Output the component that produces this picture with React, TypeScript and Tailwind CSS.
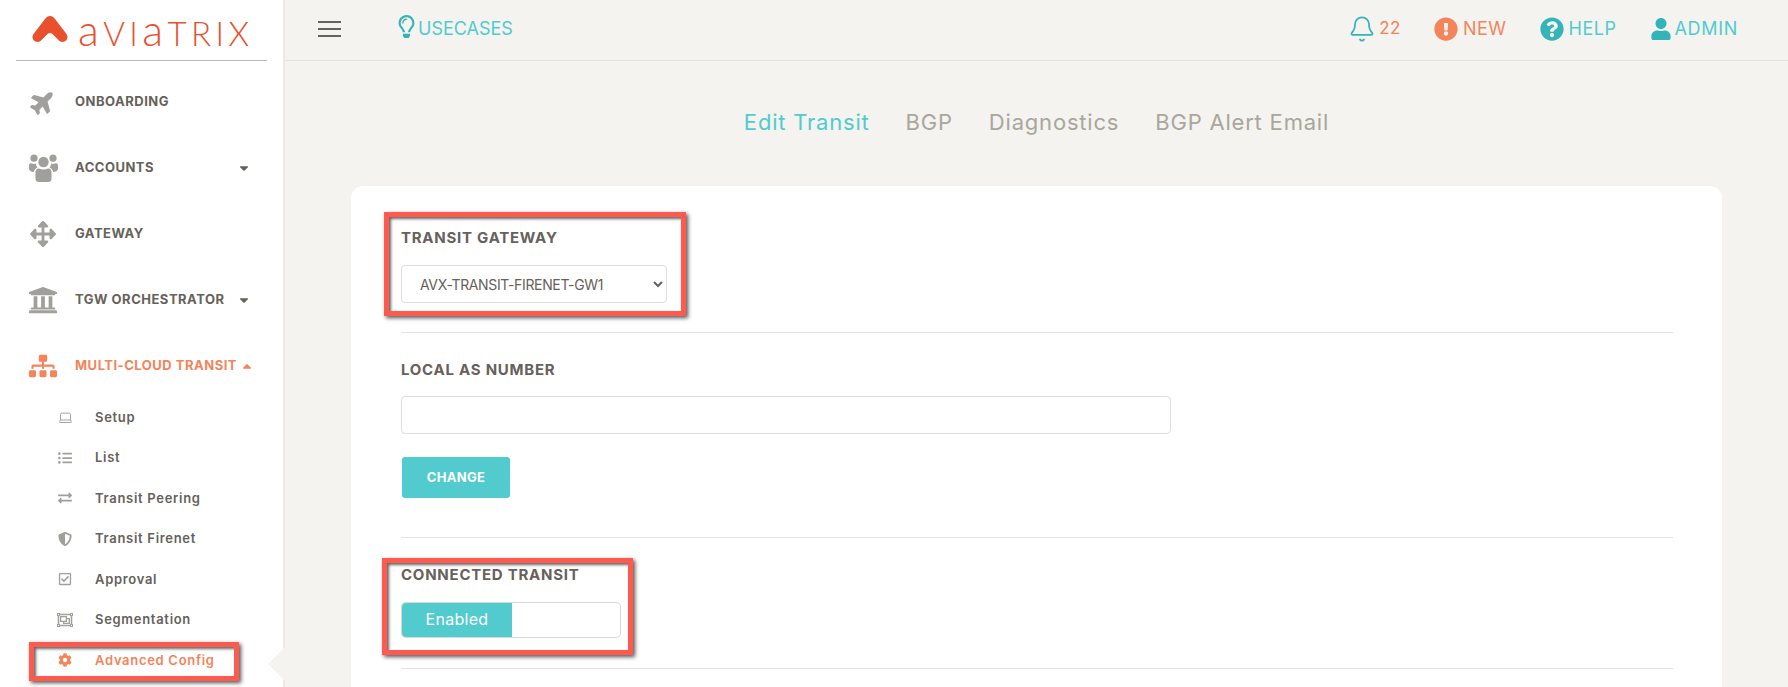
import { FaPlane, FaArrowsAlt, FaUniversity, FaSitemap, FaListUl, FaExchangeAlt, FaShieldAlt, FaRegCheckSquare, FaRegObjectGroup, FaCog, FaRegLightbulb, FaExclamationCircle, FaQuestionCircle, FaUser, FaCaretDown, FaCaretUp } from "react-icons/fa";
import { Bell, Laptop } from "lucide-react";

const font = "font-['Inter',sans-serif]";

const RedBox = ({ className }: { className: string }) => (
  <div className={`absolute border-[5px] border-[#ff5a4d] shadow-[2px_2px_4px_#555,inset_2px_2px_3px_#666] pointer-events-none ${className}`} />
);

const UsersIcon = () => (
  <svg width="29" height="28" viewBox="0 0 29 28" fill="#a09f9c">
    <circle cx="5" cy="4.2" r="3.6" />
    <circle cx="24" cy="4.2" r="3.6" />
    <circle cx="14.5" cy="8" r="5.2" />
    <path d="M0 11.5 C0 9.5 1.5 9 3 9.5 C4 10 5.5 10 6.8 9.5 C7 11 7.5 12.5 8.5 13.5 C6.5 14.5 5 16 4.8 18 C2 18 0 16.5 0 14.5 Z" />
    <path d="M29 11.5 C29 9.5 27.5 9 26 9.5 C25 10 23.5 10 22.2 9.5 C22 11 21.5 12.5 20.5 13.5 C22.5 14.5 24 16 24.2 18 C27 18 29 16.5 29 14.5 Z" />
    <path d="M6.5 18.5 C6.5 15.5 8 14.3 10 14.5 C12.5 15.8 16.5 15.8 19 14.5 C21 14.3 22.5 15.5 22.5 18.5 L22.5 25 C22.5 27 21 28 19.5 28 L9.5 28 C8 28 6.5 27 6.5 25 Z" />
  </svg>
);

const NavItem = ({ icon, label, caret, active }: { icon: React.ReactNode; label: string; caret?: "down" | "up"; active?: boolean }) => (
  <div className={`h-[66px] flex items-center ${active ? "text-[#f4845a]" : "text-[#66615b]"}`}>
    <div className={`w-[75px] flex justify-center pl-[11px] text-[26px] ${active ? "text-[#f4845a]" : "text-[#a09f9c]"}`}>{icon}</div>
    <span className="text-[13px] font-bold tracking-[0.5px]">{label}</span>
    {caret === "down" && <FaCaretDown className="absolute left-[237px] text-[#66615b] text-[14px]" />}
    {caret === "up" && <FaCaretUp className="ml-[3px] text-[#f4845a] text-[14px]" />}
  </div>
);

const SubItem = ({ icon, label, active }: { icon: React.ReactNode; label: string; active?: boolean }) => (
  <div className={`h-[40.5px] flex items-center text-[13px] font-semibold tracking-[0.7px] ${active ? "text-[#f4845a]" : "text-[#66615b]"}`}>
    <div className={`w-[95px] flex justify-center pl-[35px] text-[14px] ${active ? "text-[#f4845a]" : "text-[#a09f9c]"}`}>{icon}</div>
    <span>{label}</span>
  </div>
);

const Sidebar = () => (
  <aside className="w-[285px] shrink-0 bg-white border-r-2 border-[#ebeae6] relative">
    <div className="mx-4 h-[61px] border-b border-[#b9b9b9] flex items-center pl-[16px] pb-[2px] text-[#e8502e]">
      <svg width="36" height="26" viewBox="0 0 36 26" className="mr-[10px] shrink-0">
        <path d="M18 0 C20 0 21.5 1 23 3 L34.5 18 C37 21.5 34.5 26 30.5 26 C28.5 26 27 25 25.5 23 L20.5 18 C19 16.5 17 16.5 15.5 18 L10.5 23 C9 25 7.5 26 5.5 26 C1.5 26 -1 21.5 1.5 18 L13 3 C14.5 1 16 0 18 0 Z" fill="#e8502e" />
      </svg>
      <span className="font-['Lato',sans-serif] font-light leading-none text-[33px] tracking-[4.4px] whitespace-nowrap">
        <span className="text-[43px]">a</span>VI<span className="text-[43px]">a</span>TRIX
      </span>
    </div>
    <div className="mt-[8px]">
      <NavItem icon={<FaPlane className="-rotate-45" />} label="ONBOARDING" />
      <NavItem icon={<UsersIcon />} label="ACCOUNTS" caret="down" />
      <NavItem icon={<FaArrowsAlt />} label="GATEWAY" />
      <NavItem icon={<FaUniversity className="text-[30px]" />} label="TGW ORCHESTRATOR" caret="down" />
      <NavItem icon={<FaSitemap className="text-[28px]" />} label="MULTI-CLOUD TRANSIT" caret="up" active />
    </div>
    <div className="-mt-[2px] relative">
      <SubItem icon={<Laptop size={15} strokeWidth={1.5} />} label="Setup" />
      <SubItem icon={<FaListUl />} label="List" />
      <SubItem icon={<FaExchangeAlt />} label="Transit Peering" />
      <SubItem icon={<FaShieldAlt />} label="Transit Firenet" />
      <SubItem icon={<FaRegCheckSquare />} label="Approval" />
      <SubItem icon={<FaRegObjectGroup className="text-[16px]" />} label="Segmentation" />
      <SubItem icon={<FaCog />} label="Advanced Config" active />
      <RedBox className="left-[29px] top-[245px] w-[210px] h-[39px]" />
    </div>
    <div className="absolute right-[-2px] top-[647px] w-[17px] h-[34px] bg-[#f4f3ef] [clip-path:polygon(100%_0,0_50%,100%_100%)]" />
  </aside>
);

const TopBar = () => (
  <header className="h-[61px] border-b border-[#e4e3df] flex items-center pl-[33px] pr-[50px] pb-[3px] text-[18px] tracking-[0.5px]">
    <div className="w-[23px] flex flex-col gap-[5px]">
      <div className="h-[2px] bg-[#66615b]" />
      <div className="h-[2px] bg-[#66615b]" />
      <div className="h-[2px] bg-[#66615b]" />
    </div>
    <div className="ml-[54px] flex items-center text-[#51cbce]">
      <FaRegLightbulb className="text-[#33b4b9] text-[23px] mb-[4px]" />
      <span className="tracking-normal">USECASES</span>
    </div>
    <div className="ml-auto flex items-center">
      <Bell size={28} strokeWidth={1.5} className="text-[#33b4b9] mr-[3px]" />
      <span className="text-[#f4845a] text-[17px]">22</span>
      <FaExclamationCircle className="ml-[33px] mr-[5px] text-[#f4845a] text-[24px]" />
      <span className="text-[#f4845a]">NEW</span>
      <FaQuestionCircle className="ml-[33px] mr-[5px] text-[#33b4b9] text-[24px]" />
      <span className="text-[#51cbce]">HELP</span>
      <FaUser className="ml-[34px] mr-[2px] text-[#33b4b9] text-[22px]" />
      <span className="text-[#51cbce] tracking-[0.7px]">ADMIN</span>
    </div>
  </header>
);

const Label = ({ children }: { children: React.ReactNode }) => (
  <div className="h-[20px] leading-[20px] text-[15px] font-bold text-[#66615b] tracking-[0.75px] whitespace-nowrap">{children}</div>
);

const Divider = ({ className }: { className: string }) => <div className={`h-px bg-[#e3e3e3] ${className}`} />;

const TransitForm = () => (
  <div className="ml-[66px] mr-[66px] bg-white rounded-t-[12px] pl-[50px] pr-[49px] pt-[42px] pb-[60px]">
    <div className="relative w-[266px]">
      <Label>TRANSIT GATEWAY</Label>
      <select className="mt-[17px] w-full h-[38px] pl-[14px] pr-[4px] bg-white border border-[#ddd] rounded-[4px] text-[14px] tracking-[-0.35px] text-[#66615b]" defaultValue="gw1">
        <option value="gw1">AVX-TRANSIT-FIRENET-GW1</option>
      </select>
      <RedBox className="-left-[17px] -top-[16px] w-[302px] h-[104px]" />
    </div>
    <Divider className="mt-[29px]" />
    <div className="mt-[27px]">
      <Label>LOCAL AS NUMBER</Label>
      <input className="mt-[16px] block w-[770px] h-[38px] border border-[#ddd] rounded-[4px] bg-white" />
      <button className="mt-[23px] ml-px block w-[108px] h-[41px] rounded-[3px] bg-[#51cbce] text-white text-[13px] font-bold tracking-[0.3px]">CHANGE</button>
    </div>
    <Divider className="mt-[39px]" />
    <div className="mt-[27px] relative w-[220px]">
      <Label>CONNECTED TRANSIT</Label>
      <div className="mt-[17px] h-[36px] w-[220px] border border-[#d8d8d8] rounded-[5px] overflow-hidden flex bg-white">
        <div className="w-[110px] bg-[#51cbce] text-white text-[16px] tracking-[0.3px] pb-[2px] flex items-center justify-center">Enabled</div>
      </div>
      <RedBox className="-left-[19px] -top-[7px] w-[251px] h-[97px]" />
    </div>
    <Divider className="mt-[30px]" />
  </div>
);

export default function App() {
  return (
    <div className={`h-[687px] overflow-hidden flex bg-[#f4f3ef] ${font}`}>
      <Sidebar />
      <main className="flex-1 min-w-0">
        <TopBar />
        <div className="h-[125px] flex items-center justify-center gap-[36px] pb-[3px] text-[22px] tracking-[0.8px]">
          <span className="text-[#51cbce]">Edit Transit</span>
          <span className="text-[#a8a69d]">BGP</span>
          <span className="text-[#a8a69d]">Diagnostics</span>
          <span className="text-[#a8a69d]">BGP Alert Email</span>
        </div>
        <TransitForm />
      </main>
    </div>
  );
}
